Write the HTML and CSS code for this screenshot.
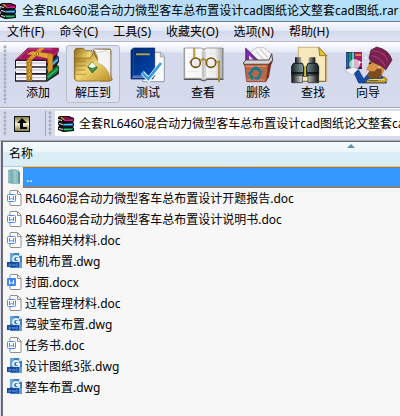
FILE: index.html
```
<!DOCTYPE html>
<html lang="zh-CN">
<head>
<meta charset="utf-8">
<title>全套RL6460混合动力微型客车总布置设计cad图纸论文整套cad图纸.rar</title>
<link rel="stylesheet" href="styles.css">
</head>
<body>
<svg class="defs" aria-hidden="true">
  <defs>
    <linearGradient id="leather" x1="0" y1="0" x2="1" y2="1"><stop offset="0" stop-color="#8c6410"/><stop offset=".45" stop-color="#f2d670"/><stop offset="1" stop-color="#b78a24"/></linearGradient>
    <linearGradient id="barrel"><stop offset="0" stop-color="#1a2428"/><stop offset=".45" stop-color="#8ba4a5"/><stop offset="1" stop-color="#141c20"/></linearGradient>
    <linearGradient id="lens"><stop offset="0" stop-color="#111"/><stop offset=".45" stop-color="#fff"/><stop offset="1" stop-color="#111"/></linearGradient>
    <linearGradient id="page"><stop offset="0" stop-color="#fff"/><stop offset=".8" stop-color="#eee"/><stop offset="1" stop-color="#aaa"/></linearGradient>
    <linearGradient id="cover" x1="0" y1="0" x2="1" y2="1"><stop offset="0" stop-color="#002a78"/><stop offset="1" stop-color="#0048b0"/></linearGradient>
    <linearGradient id="up" x1="0" y1="0" x2="0" y2="1"><stop offset="0" stop-color="#857d45"/><stop offset=".5" stop-color="#f5f0c8"/><stop offset="1" stop-color="#857d45"/></linearGradient>
    <symbol id="archive" viewBox="0 0 16 16">
      <path d="M0 1l2-1h9l5 2v3l-1 1 1 1v3l-1 1 1 1v3l-9 1H5l-5-2v-3l1-1-1-2V6l1-1-1-1z" fill="#141018"/>
      <path d="M1 1h9l5 1-8 2z" fill="#8c1048"/><path d="M6 4l9-1v2H6z" fill="#e0208c"/>
      <path d="M5 8l10-1v3H5z" fill="#1c6cb4"/><path d="M6 8h8v1H6z" fill="#48c4e8"/>
      <path d="M5 12h10v2l-9 1z" fill="#0c7440"/><path d="M6 13h8v1H6z" fill="#28c078"/>
      <path d="M0 3l4 1v1L0 4zM1 7l4 1v1L1 8zM1 12l4 1v1l-4-1z" fill="#ece4e8"/>
      <path d="M2 1h2l3 3H5z" fill="#b4a020"/>
    </symbol>
    <symbol id="word" viewBox="0 0 16 16">
      <path d="M3.500 .5h7l3.500 3.500v10.500q0 1-1 1h-9q-1 0-1-1v-13q0-1 .5-1z" fill="#fff" stroke="#8d8d92"/>
      <path d="M10.500 1v3.500H14" fill="none" stroke="#8d8d92"/>
      <rect x=".5" y="4.500" width="8" height="7" rx="1" fill="#fff" stroke="#4e8cf0"/>
      <path d="M2.500 6v4l2-2 2 2V6" fill="none" stroke="#4e8cf0"/>
    </symbol>
    <symbol id="wordx" viewBox="0 0 16 16">
      <path d="M3.500 .5h7l3.500 3.500v10.500q0 1-1 1h-9q-1 0-1-1v-13q0-1 .5-1z" fill="#fff" stroke="#8d8d92"/>
      <path d="M10.500 1v3.500H14" fill="none" stroke="#8d8d92"/>
      <rect y="4" width="9" height="8" rx="1" fill="#4287f5"/>
      <path d="M2.500 6v4l2-2 2 2V6" fill="none" stroke="#fff"/>
    </symbol>
    <symbol id="dwg" viewBox="0 0 16 16">
      <path d="M3 0h9l3 3v12H3z" fill="#3f7fc0"/><path d="M3 0h4l-2 8H3z" fill="#6aa6d6"/><path d="M12 0l3 3h-3z" fill="#d6ebf8"/>
      <path d="M12 4Q6 1 6 7q2 4 6 1V6H9" fill="none" stroke="#e3f2fb" stroke-width="2"/>
      <path d="M12 9h3v6h-3z" fill="#5ba0d8"/>
      <path d="M0 9h12v5H0z" fill="#1848a0"/><path d="M2 11v2h1l1-1-1-1zM5 11l1 2 1-2 1 2M11 11H9v2h2" fill="none" stroke="#4f86cc"/>
    </symbol>
    <symbol id="folder" viewBox="0 0 16 16">
      <path d="M1 1l5-1v15l-5-1z" fill="#7fb0b6"/><path d="M6 0l6 1v14H6z" fill="#8fc0c2"/><path d="M11 2l2 1v12l-2-1z" fill="#6599a2"/><path d="M2 2v11M8 2v11" stroke="#a8d0d0" fill="none"/>
    </symbol>
  </defs>
</svg>

<div class="window">
  <header class="titlebar">
    <svg class="icon"><use href="#archive"/></svg>
    <h1 class="title">全套RL6460混合动力微型客车总布置设计cad图纸论文整套cad图纸.rar</h1>
  </header>

  <nav class="menubar">
    <button>文件(F)</button>
    <button>命令(C)</button>
    <button>工具(S)</button>
    <button>收藏夹(O)</button>
    <button>选项(N)</button>
    <button>帮助(H)</button>
  </nav>

  <div class="toolbar">
    <span class="grip"></span>
    <button class="tool">
      <svg viewBox="48 21 132 108">
        <path d="M45 61L84 23h92v11l-5 11 6 7v14l-6 8 6 7v20l-36 24H45V98l4-8-4-7z" fill="#241820"/>
        <path d="M46 59L85 24h91l-36 35z" fill="#a3195f"/><path d="M56 54L86 27h70" fill="none" stroke="#c94b8c" stroke-width="3"/>
        <path d="M140 60l35-34v10l-35 36z" fill="#c91a72"/>
        <path d="M140 79l35-31v15l-35 31z" fill="#1d62a8"/><path d="M143 86l30-27" stroke="#59c4ea" stroke-width="4"/>
        <path d="M140 102l35-28v21l-35 27z" fill="#087a35"/><path d="M143 112l30-26" stroke="#38c570" stroke-width="4"/>
        <path d="M48 63h90v16H48zM48 83h90v16H48zM48 104h90v17H48z" fill="#f6f6fa"/>
        <path d="M50 69h88M50 90h88M50 113h88" stroke="#b9b9cc" stroke-width="3"/>
        <path d="M80 59l39-35h15L96 59v63H80z" fill="#d99828"/><path d="M81 59h14v62H81z" fill="none" stroke="#9a5c08" stroke-width="2"/>
        <path d="M79 42L98 34l60 8v14l-12 10V56L92 44z" fill="#e3a534" stroke="#9a6411"/>
        <path d="M144 44h14v44l-14 12z" fill="#d99828" stroke="#9a5c08"/>
        <g fill="#ffe34a" stroke="#6c4208" stroke-width="2"><circle cx="88" cy="72" r="4"/><circle cx="88" cy="93" r="4"/><circle cx="88" cy="114" r="4"/><circle cx="112" cy="42" r="4"/></g>
      </svg>添加
    </button>
    <button class="tool hover">
      <svg viewBox="213 21 132 108">
        <path d="M223 42V32l5-7h22l6 7h20v10l10 14-2 66h-56l-5-5z" fill="url(#leather)" stroke="#6d4b08" stroke-width="2"/>
        <path d="M280 30l5-3h45l3 5v88l-4 3h-30z" fill="#a8791a" stroke="#684707" stroke-width="2"/>
        <path d="M278 28q19 11 15 37 28 11 38 46V29z" fill="#fff" stroke="#777"/>
        <path d="M225 54h45l11-15 15 28q27 5 41 53l-8 3h-99l-5-6z" fill="url(#leather)" stroke="#8d671a" stroke-width="2"/>
        <path d="M285 38q12 10 7 30 33 10 39 48V43l-13-11z" fill="#f4f4f2" stroke="#888"/>
        <path d="M227 64h31M227 77h31M227 90h31M227 103h31" stroke="#9f7924" stroke-width="2"/>
        <path d="M263 80l14-14 15 17-15 16z" fill="#4b9144" stroke="#174e22" stroke-width="2"/><path d="M265 79l12-12 12 12-12 5z" fill="#f6fff3"/>
      </svg>解压到
    </button>
    <button class="tool">
      <svg viewBox="-12 21 132 108">
        <path d="M46 37h46l11 13v75H38z" fill="#f8f9fb" stroke="#929aa5" stroke-width="3"/><path d="M91 36v15h12" fill="#ccd4dc" stroke="#87909b" stroke-width="2"/>
        <path d="M3 31l7-7h64v83l-6 10H3z" fill="url(#cover)" stroke="#001b52" stroke-width="2"/>
        <path d="M9 108h62M7 112h62" stroke="#b9c6dd" stroke-width="2"/><path d="M11 24v83" stroke="#2855a0" stroke-width="2"/>
        <path d="M18 43h41" stroke="#e4c641" stroke-width="5"/><path d="M18 43h41" stroke="#604c12"/>
        <path d="M37 97l19 21 37-48" fill="none" stroke="#fff" stroke-width="13"/><path d="M36 97l19 20 38-48" fill="none" stroke="#359be0" stroke-width="8"/>
      </svg>测试
    </button>
    <button class="tool">
      <svg viewBox="153 21 132 108">
        <path d="M160 25h122v95H160z" fill="#b8b8b8"/><path d="M164 24h50l7 7 7-7h50v91h-49l-8 7-8-7h-49z" fill="url(#page)" stroke="#777" stroke-width="2"/>
        <path d="M221 29v91M217 35v77M225 35v77" stroke="#999" stroke-width="2"/>
        <path d="M162 118h47l12 5 12-5h47" fill="none" stroke="#444" stroke-width="3"/>
        <path d="M172 42h30M172 52h30M172 95h32M237 42h28M237 95h26" stroke="#ddd" stroke-width="2"/>
        <g fill="#eee" stroke="#76550e" stroke-width="5"><circle cx="197" cy="68" r="14"/><circle cx="243" cy="68" r="14"/></g>
        <path d="M210 64q11-13 20 0M183 68l-4-3M257 68l10-3v61M193 53V25" fill="none" stroke="#84651a" stroke-width="5"/>
        <path d="M210 64q11-13 20 0M257 68l10-3v61M193 53V25" fill="none" stroke="#e9ca53" stroke-width="2"/>
      </svg>查看
    </button>
    <button class="tool">
      <svg viewBox="318 21 132 108">
        <path d="M363 34l18-11h21l23 20v22h-62z" fill="#f5f5f5" stroke="#aaa" stroke-width="2"/><path d="M377 33l24 25M390 27l24 27" stroke="#bbb" stroke-width="3"/>
        <path d="M347 24v47h48z" fill="#7a2ca8" stroke="#481568" stroke-width="2"/><path d="M357 46v17h17z" fill="#ede0f3"/>
        <path d="M341 67l7-7h69l8-19 3 20-5 12h-82z" fill="#d5d6d8" stroke="#4f4343" stroke-width="3"/>
        <path d="M344 73h71l-7 52h-58z" fill="#b7674b" stroke="#713523" stroke-width="2"/><path d="M415 73l11-13-9 51-9 14z" fill="#7a3020"/>
        <path d="M348 79h61M350 120h53" stroke="#dc9a77" stroke-width="3"/>
        <g fill="none" stroke="#087c90" stroke-width="7"><path d="M365 91l13-8 12 10M391 100l-6 15h-11M366 113l-7-13 8-7"/></g><path d="M371 80l13 2-6 10zM386 91l12 2-6 10zM370 108v13l-10-7z" fill="#087c90"/>
      </svg>删除
    </button>
    <button class="tool">
      <svg viewBox="75 21 132 108">
        <path d="M97 22h62l23 24v78H97z" fill="#f8e9bd" stroke="#b89b55" stroke-width="2"/><path d="M158 22l3 25h21z" fill="#e6c230" stroke="#6c5312" stroke-width="2"/>
        <path d="M179 48v76H99" fill="none" stroke="#836c32" stroke-width="3"/>
        <path d="M87 52h19v20H87zM128 52h20v20h-20z" fill="url(#lens)"/>
        <path d="M106 80h22v30h-22z" fill="#29250c"/><path d="M113 79h9v29h-9z" fill="#ddbe29"/>
        <path d="M82 70h27l4 10v26H77V79zM126 70h27l5 10v26h-36V80z" fill="url(#barrel)" stroke="#11191b" stroke-width="3"/>
        <path d="M78 99h34M123 99h34" stroke="#050909" stroke-width="4"/><path d="M77 106h32v22H77zM126 106h32v22h-32z" fill="url(#lens)" stroke="#222" stroke-width="2"/>
      </svg>查找
    </button>
    <button class="tool">
      <svg viewBox="240 21 132 108">
        <path d="M240 36h48v51h-48z" fill="#24182c"/><path d="M241 38h7v45h-7z" fill="#2268b9"/><path d="M249 37h8v46h-8z" fill="#139653"/><path d="M258 37h7v47h-7z" fill="#64bfd0"/><path d="M266 36h22v46h-22z" fill="#ad1c5c"/><path d="M268 45h18" stroke="#e6c23d" stroke-width="4"/>
        <circle cx="266" cy="73" r="16" fill="#fff" opacity=".65"/>
        <path d="M235 90l28-8 20 8-12 14h-16z" fill="#f0f1fa" stroke="#abaec9" stroke-width="2"/>
        <path d="M265 100l12-11 16 28 22-25 35 17 12 20h-84z" fill="#174ca8" stroke="#0c286c" stroke-width="2"/>
        <path d="M310 61l10-9 29 21 6 20-11 19-26-1-9-18-9-3 8-17z" fill="#d89248"/>
        <path d="M310 94l16 0 9-10 12 3-1 22-18 8-18-3-7-10z" fill="#7c4c20"/><path d="M309 72l7-4" stroke="#271506" stroke-width="4"/><circle cx="340" cy="80" r="6" fill="#e4a86a"/>
        <path d="M309 55l6-25 17-9q37 8 46 39l-19 30-13-12-31-14z" fill="#79204f" stroke="#421029" stroke-width="2"/><path d="M317 32q37 0 49 31M316 47q27 2 41 32" fill="none" stroke="#a13a71" stroke-width="4"/>
        <path d="M302 119q28 10 54-8l8 8-7 9h-56z" fill="#d0a528" stroke="#5c4710" stroke-width="2"/><path d="M308 119l46-1" stroke="#f8e26c" stroke-width="3"/>
        <path d="M281 62v11M276 67h11M299 27v6M296 30h6M246 27v6M243 30h6M262 22v6M300 50v6M297 53h6" stroke="#fff" stroke-width="3"/>
      </svg>向导
    </button>
  </div>

  <div class="addressbar">
    <span class="grip"></span>
    <button class="up" aria-label="上一级">
      <svg viewBox="0 0 16 16"><path d="M0 0h16v16H0z" fill="#111"/><path d="M1 1h14v14H1z" fill="url(#up)"/><path d="M3 7l5-5 5 5H9v4h4v2H6V7z" fill="#050505"/></svg>
    </button>
    <span class="grip"></span>
    <div class="path">
      <svg class="icon"><use href="#archive"/></svg>
      <input type="text" aria-label="路径" value="全套RL6460混合动力微型客车总布置设计cad图纸论文整套cad图纸.rar">
    </div>
  </div>

  <main class="listing">
    <table>
      <thead><tr><th scope="col">名称<span class="sort"></span></th></tr></thead>
      <tbody>
        <tr class="selected"><td><div class="file"><svg class="icon"><use href="#folder"/></svg><span class="name">..</span></div></td></tr>
        <tr><td><div class="file"><svg class="icon"><use href="#word"/></svg><span class="name">RL6460混合动力微型客车总布置设计开题报告.doc</span></div></td></tr>
        <tr><td><div class="file"><svg class="icon"><use href="#word"/></svg><span class="name">RL6460混合动力微型客车总布置设计说明书.doc</span></div></td></tr>
        <tr><td><div class="file"><svg class="icon"><use href="#word"/></svg><span class="name">答辩相关材料.doc</span></div></td></tr>
        <tr><td><div class="file"><svg class="icon"><use href="#dwg"/></svg><span class="name">电机布置.dwg</span></div></td></tr>
        <tr><td><div class="file"><svg class="icon"><use href="#wordx"/></svg><span class="name">封面.docx</span></div></td></tr>
        <tr><td><div class="file"><svg class="icon"><use href="#word"/></svg><span class="name">过程管理材料.doc</span></div></td></tr>
        <tr><td><div class="file"><svg class="icon"><use href="#dwg"/></svg><span class="name">驾驶室布置.dwg</span></div></td></tr>
        <tr><td><div class="file"><svg class="icon"><use href="#word"/></svg><span class="name">任务书.doc</span></div></td></tr>
        <tr><td><div class="file"><svg class="icon"><use href="#dwg"/></svg><span class="name">设计图纸3张.dwg</span></div></td></tr>
        <tr><td><div class="file"><svg class="icon"><use href="#dwg"/></svg><span class="name">整车布置.dwg</span></div></td></tr>
      </tbody>
    </table>
  </main>
</div>
</body>
</html>
```

FILE: styles.css
```
* { box-sizing: border-box; }

body,
button,
input {
  margin: 0;
  font: 12px/20px "Noto Sans", "Noto Sans CJK SC", sans-serif;
  color: #000;
}

button {
  padding: 0;
  border: 0;
  background: none;
  white-space: nowrap;
}

.defs {
  position: absolute;
  width: 0;
  height: 0;
}

.window {
  display: flex;
  flex-direction: column;
  min-height: 100vh;
  overflow: hidden;
  background: #d5daec;
}

.icon {
  flex: none;
  width: 16px;
  height: 16px;
}

.titlebar {
  display: flex;
  align-items: center;
  gap: 6px;
  height: 22px;
  border-bottom: 1px solid #6f7c8c;
  background: linear-gradient(90deg, #d9edfc, #b9dcf5 45%, #b4e2fa);
}

.title {
  margin: 0;
  font-size: 12px;
  font-weight: 400;
  white-space: nowrap;
}

.menubar {
  display: flex;
  gap: 15px;
  height: 20px;
  padding-left: 7px;
  background: linear-gradient(#f8f9fd, #e4e8f5 45%, #d3d9ec 50%, #dfe3f3);
  border-bottom: 1px solid #b4b8c8;
}

.toolbar {
  display: flex;
  gap: 1px;
  height: 66px;
  padding: 3px 0 4px 3px;
  background: linear-gradient(#fff, #e6e9f5 10px, #d4d9ec 11px, #d5daec);
  border-bottom: 1px solid #a7a8b4;
}

.grip {
  flex: none;
  width: 7px;
  background: linear-gradient(135deg, #fff 25%, #a9adbd 25%) 1px 1px / 3px 4px repeat-y;
  background: radial-gradient(circle at 2px 2px, #a9adbd 1px, transparent 2px) 0 0 / 7px 4px repeat-y;
}

.tool {
  display: flex;
  flex: none;
  flex-direction: column;
  align-items: center;
  width: 54px;
  height: 58px;
  padding-top: 1px;
  border: 1px solid transparent;
  border-radius: 3px;
}

.tool svg {
  flex: none;
  width: 44px;
  height: 36px;
  overflow: visible;
}

.tool.hover {
  border-color: #b8bdca;
  background: #dbdfef;
}

.addressbar {
  display: flex;
  align-items: center;
  height: 33px;
  padding: 2px 0 4px 3px;
  border-top: 1px solid #f5f6fb;
  border-bottom: 1px solid #a7a8b4;
}

.addressbar .grip { align-self: stretch; }

.up {
  display: flex;
  align-items: center;
  align-self: stretch;
  width: 36px;
  margin-right: 2px;
  padding-left: 4px;
  border-right: 1px solid #a7a8b4;
}

.up svg {
  width: 16px;
  height: 16px;
}

.path {
  display: flex;
  flex: 1;
  align-items: center;
  align-self: stretch;
  gap: 5px;
  min-width: 0;
  padding-left: 3px;
  background: #fff;
}

.path input {
  flex: 1;
  min-width: 0;
  padding: 0;
  border: 0;
  outline: 0;
  background: none;
}

.listing {
  flex: 1;
  margin-left: 1px;
  border: solid #69696f;
  border-width: 1px 0 0 2px;
  background: #f7f7f7;
  overflow: hidden;
}

table {
  width: 100%;
  min-width: 688px;
  border-collapse: collapse;
}

th {
  position: relative;
  height: 24px;
  padding: 0 6px;
  border-bottom: 1px solid #a9d3e3;
  background: linear-gradient(#f4fafc, #edf6fa 40%, #d9edf5 45%, #dceef5);
  font-weight: 400;
  text-align: left;
}

.sort {
  position: absolute;
  top: 2px;
  left: 50%;
  border: solid transparent;
  border-width: 0 4px 4px;
  border-bottom-color: #5f93ad;
}

td { padding: 0; }

.file {
  display: flex;
  align-items: center;
  height: 21px;
  padding-left: 4px;
}

.name {
  padding-left: 2px;
  line-height: 21px;
  white-space: nowrap;
}

.selected .name {
  flex: 1;
  border: 1px dotted #cc6600;
  line-height: 19px;
  background: #3399ff;
  color: #fff;
}
```
